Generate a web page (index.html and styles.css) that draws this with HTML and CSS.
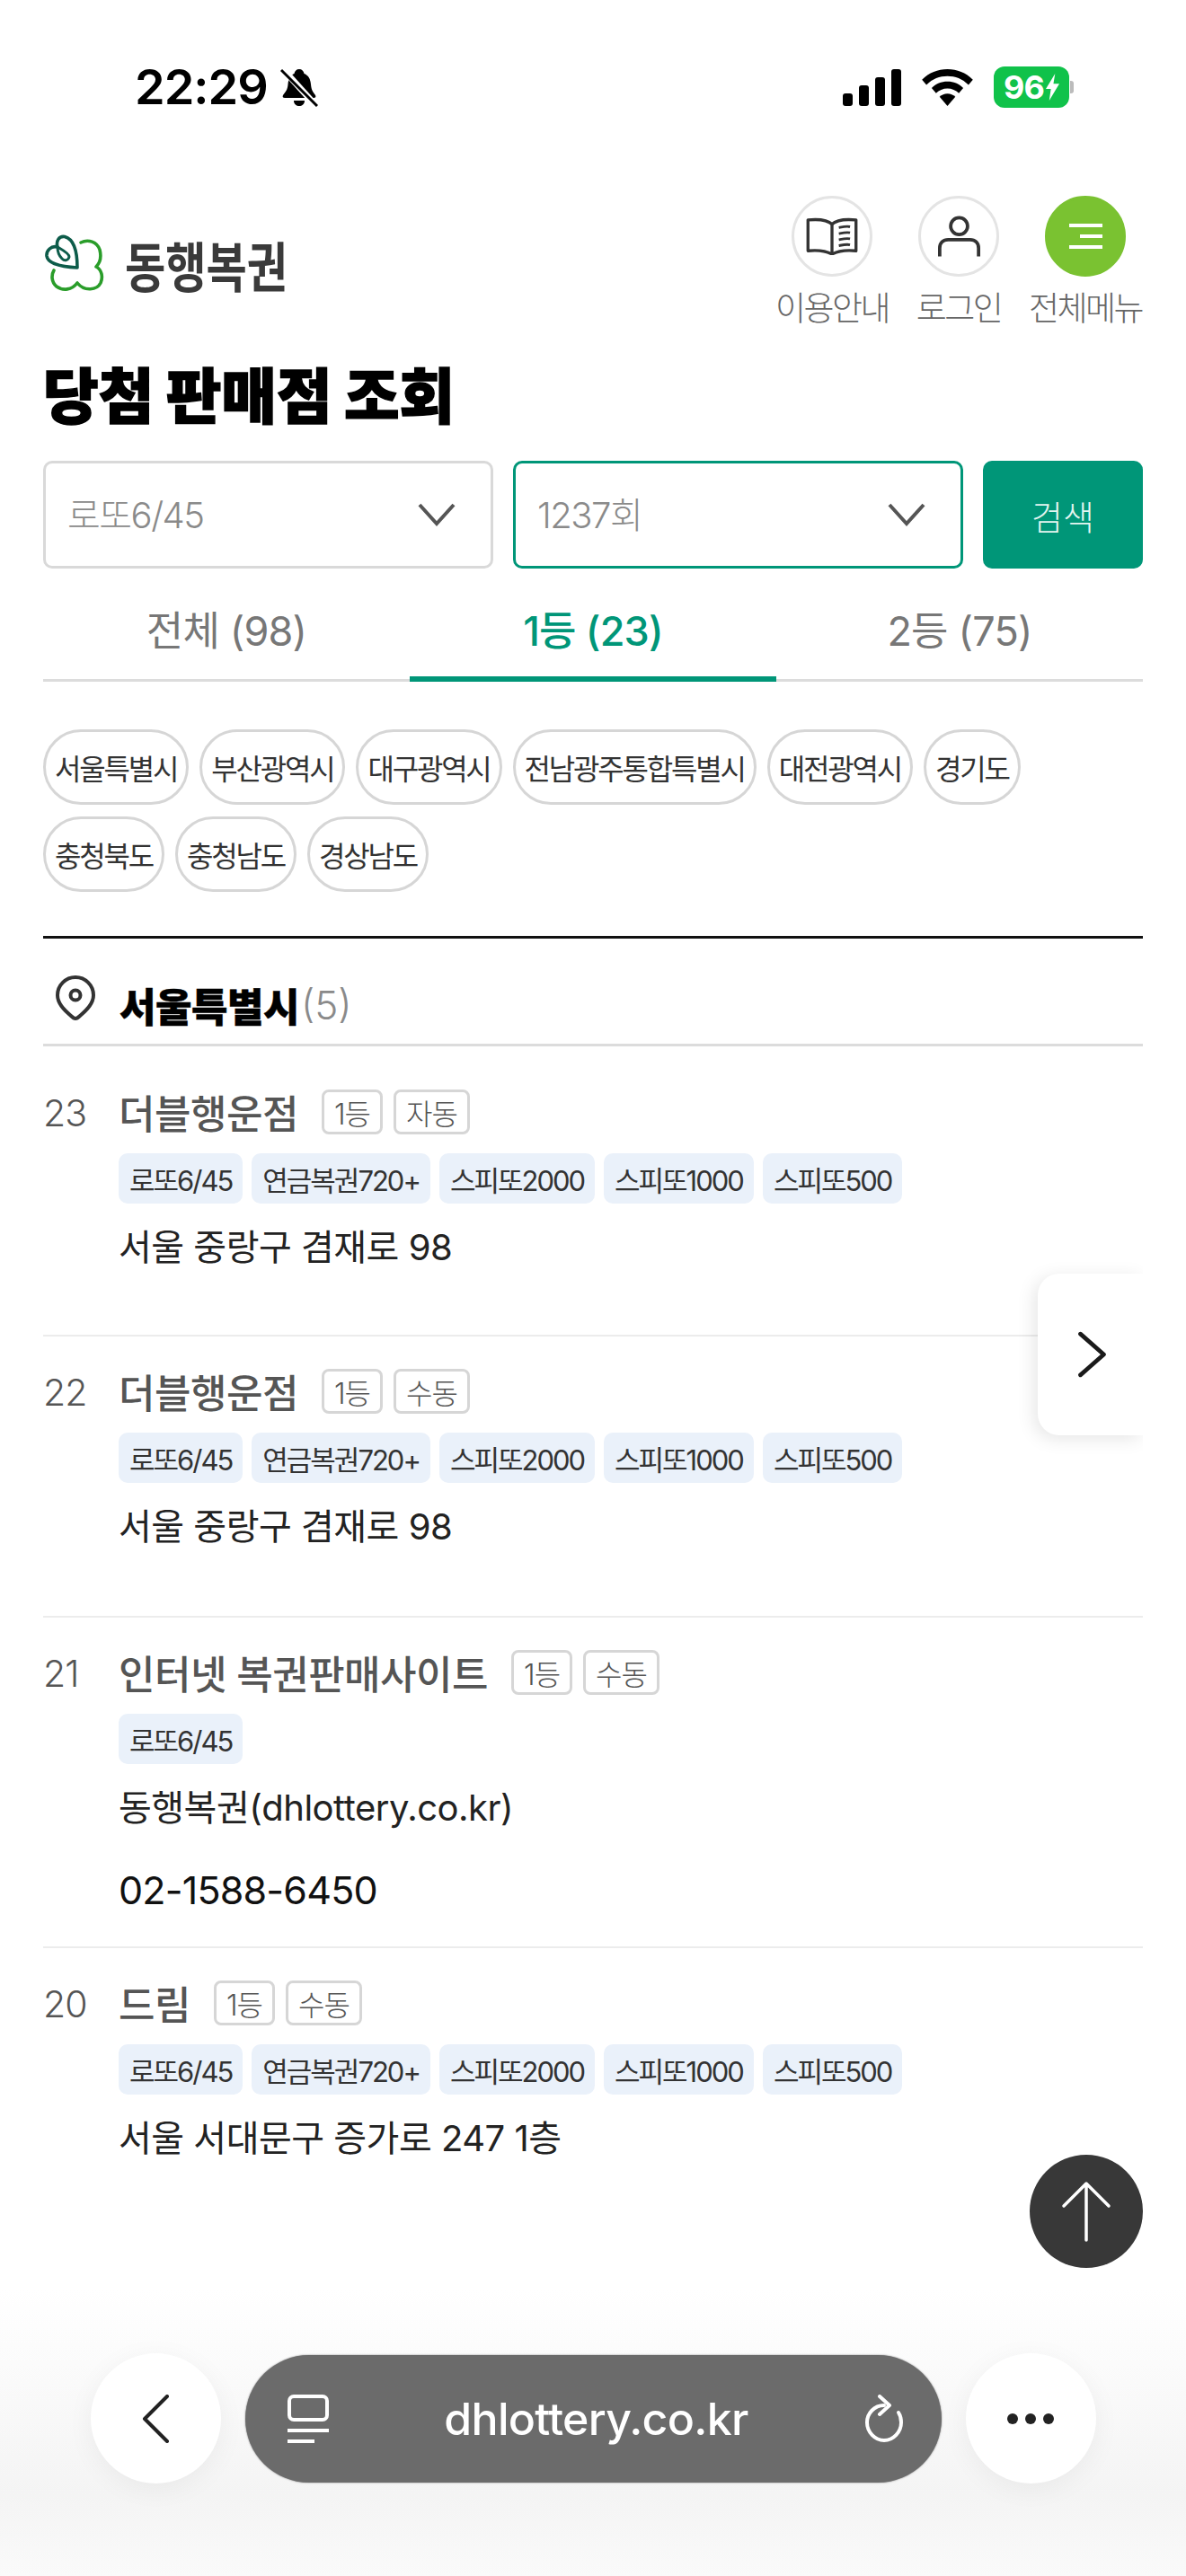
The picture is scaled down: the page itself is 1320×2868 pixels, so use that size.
FILE: index.html
```html
<!DOCTYPE html>
<html lang="ko">
<head>
  <meta charset="UTF-8">
  <meta name="viewport" content="width=device-width, initial-scale=1.0">
  <title>당첨 판매점 조회</title>
  <link rel="stylesheet" href="styles.css">
</head>
<body>

<div class="statusBar">
  <div class="statusLeft">
    <span class="clock">22:29</span>
    <svg class="bell" viewBox="0 0 42 44"><path d="M21 2c3 0 5 2 5.500 5 5 2 7 6 7.500 12 .5 6 2 8 5 12 1 2 0 3-2 3H5c-2 0-3-1-2-3 3-4 5-6 5.500-12C9 13 11 9 15.500 7 16 4 18 2 21 2z" fill="#000"/><path d="M15 37h12c0 4-3 6-6 6s-6-2-6-6z" fill="#000"/><path d="M2 1l38 42" stroke="#fff" stroke-width="7"/><path d="M1 3l40 40" stroke="#000" stroke-width="3"/></svg>
  </div>
  <div class="statusRight">
    <div class="signal"><i class="sig1"></i><i class="sig2"></i><i class="sig3"></i><i class="sig4"></i></div>
    <svg class="wifi" viewBox="0 0 58 42"><path d="M29 0c11 0 21 4 29 12l-5 6C46 11 38 8 29 8S12 11 5 18l-5-6C8 4 18 0 29 0z"/><path d="M29 14c7 0 13 2.500 18 7.500l-5 6c-3.500-3.500-8-5.500-13-5.500s-9.500 2-13 5.500l-5-6C16 16.500 22 14 29 14z"/><path d="M29 28c3.500 0 6.500 1.300 9 3.500L29 42l-9-10.500c2.500-2.200 5.500-3.500 9-3.500z"/></svg>
    <div class="battery"><span class="batteryLevel">96</span><svg class="bolt" viewBox="0 0 16 32"><path d="M11 0L0 18h6l-2 14L16 12H9z" fill="#fff"/></svg></div>
    <div class="batteryCap"></div>
  </div>
</div>

<div class="page">
  <header class="siteHeader">
    <div class="logo">
      <svg class="logoMark" viewBox="0 0 66 64" fill="none" stroke-linecap="round" stroke-linejoin="round">
        <path d="M40 9C48 5 58 8 61 17C63 25 61 32 57 36C63 39 65 47 62 54C58 62 44 64 36 54C30 62 20 63 13 58C7 53 7 45 10 40" stroke="#2a9d2a" stroke-width="3.600"/>
        <path d="M36 37C36 25 35 6 22 2.500C16 1.500 12 7 14 14C7 12 1.500 18 2 24C3 33 20 36 36 37z" stroke="#0d5c4a" stroke-width="3.600"/>
        <path d="M14 14C19 17 27 21 27 25C26 29 22 30 19 27C16 24 14 20 14 14z" stroke="#0d5c4a" stroke-width="3"/>
      </svg>
      <span class="logoText">동행복권</span>
    </div>
    <nav class="headerMenu">
      <div class="menuItem">
        <div class="menuIcon">
          <svg viewBox="0 0 62 44" width="60" height="42" fill="none" stroke="#333" stroke-width="3.500" stroke-linejoin="round"><path d="M31 8C26 3 14 2 3 3v36c10-1 21 0 28 4 7-4 18-5 28-4V3C48 2 36 3 31 8z"/><path d="M31 8v35"/><path d="M39 12c5-1 9-2 13-1M39 19c5-1 9-2 13-1M39 26c5-1 9-2 13-1M39 33c5-1 9-2 13-1" stroke-width="3"/></svg>
        </div>
        <span class="menuLabel">이용안내</span>
      </div>
      <div class="menuItem">
        <div class="menuIcon">
          <svg viewBox="0 0 50 48" width="47" height="48" fill="none" stroke="#333" stroke-width="4"><circle cx="25" cy="12" r="10"/><path d="M2 48V38c0-6 4-10 10-10h26c6 0 10 4 10 10v10"/></svg>
        </div>
        <span class="menuLabel">로그인</span>
      </div>
      <div class="menuItem">
        <div class="menuIcon menuIconGreen">
          <div class="menuBars"><i class="barLong"></i><i class="barShort"></i><i class="barLong"></i></div>
        </div>
        <span class="menuLabel">전체메뉴</span>
      </div>
    </nav>
  </header>

  <h1 class="pageTitle">당첨 판매점 조회</h1>

  <div class="searchRow">
    <div class="selectBox">
      <span class="selectText">로또6/45</span>
      <svg class="chevron" viewBox="0 0 42 26"><path d="M2 2l19 21L40 2" fill="none" stroke="#555" stroke-width="4"/></svg>
    </div>
    <div class="selectBox selectActive">
      <span class="selectText">1237회</span>
      <svg class="chevron" viewBox="0 0 42 26"><path d="M2 2l19 21L40 2" fill="none" stroke="#555" stroke-width="4"/></svg>
    </div>
    <button class="searchButton">검색</button>
  </div>

  <div class="tabs">
    <div class="tab">전체 (98)</div>
    <div class="tab tabActive">1등 (23)</div>
    <div class="tab">2등 (75)</div>
  </div>

  <div class="chips">
    <span class="chip">서울특별시</span>
    <span class="chip">부산광역시</span>
    <span class="chip">대구광역시</span>
    <span class="chip">전남광주통합특별시</span>
    <span class="chip">대전광역시</span>
    <span class="chip">경기도</span>
    <span class="chip">충청북도</span>
    <span class="chip">충청남도</span>
    <span class="chip">경상남도</span>
  </div>

  <div class="regionHead">
    <svg class="pin" viewBox="0 0 44 50" fill="none" stroke="#333" stroke-width="4"><path d="M22 48c-2 0-3-1-5-3C9 38 2 31 2 22 2 11 11 2 22 2s20 9 20 20c0 9-7 16-15 23-2 2-3 3-5 3z"/><circle cx="22" cy="22" r="5.500"/></svg>
    <span class="regionName">서울특별시</span><span class="regionCount">(5)</span>
  </div>

  <div class="shopRow shopRowFirst">
    <span class="shopNum">23</span>
    <div class="shopBody">
      <div class="shopTitle"><span class="shopName">더블행운점</span><span class="badge">1등</span><span class="badge">자동</span></div>
      <div class="tags"><span class="tag">로또6/45</span><span class="tag">연금복권720+</span><span class="tag">스피또2000</span><span class="tag">스피또1000</span><span class="tag">스피또500</span></div>
      <p class="address">서울 중랑구 겸재로 98</p>
    </div>
  </div>

  <div class="shopRow">
    <span class="shopNum">22</span>
    <div class="shopBody">
      <div class="shopTitle"><span class="shopName">더블행운점</span><span class="badge">1등</span><span class="badge">수동</span></div>
      <div class="tags"><span class="tag">로또6/45</span><span class="tag">연금복권720+</span><span class="tag">스피또2000</span><span class="tag">스피또1000</span><span class="tag">스피또500</span></div>
      <p class="address">서울 중랑구 겸재로 98</p>
    </div>
  </div>

  <div class="shopRow shopRowTall">
    <span class="shopNum">21</span>
    <div class="shopBody">
      <div class="shopTitle"><span class="shopName">인터넷 복권판매사이트</span><span class="badge">1등</span><span class="badge">수동</span></div>
      <div class="tags"><span class="tag">로또6/45</span></div>
      <p class="address">동행복권(dhlottery.co.kr)</p>
      <p class="phone">02-1588-6450</p>
    </div>
  </div>

  <div class="shopRow">
    <span class="shopNum">20</span>
    <div class="shopBody">
      <div class="shopTitle"><span class="shopName">드림</span><span class="badge">1등</span><span class="badge">수동</span></div>
      <div class="tags"><span class="tag">로또6/45</span><span class="tag">연금복권720+</span><span class="tag">스피또2000</span><span class="tag">스피또1000</span><span class="tag">스피또500</span></div>
      <p class="address">서울 서대문구 증가로 247 1층</p>
    </div>
  </div>
</div>

<div class="nextButton">
  <svg viewBox="0 0 32 50" width="34" height="52"><path d="M3 3l25 22L3 47" fill="none" stroke="#1a1a1a" stroke-width="4.500" stroke-linecap="round" stroke-linejoin="round"/></svg>
</div>

<div class="topButton">
  <svg viewBox="0 0 56 68" width="56" height="68"><path d="M28 66V3M3 28L28 3l25 25" fill="none" stroke="#fff" stroke-width="3.500" stroke-linecap="round" stroke-linejoin="round"/></svg>
</div>

<div class="browserBar">
  <div class="roundButton">
    <svg viewBox="0 0 32 54" width="32" height="54"><path d="M29 2L4 27l25 25" fill="none" stroke="#222" stroke-width="4" stroke-linecap="round" stroke-linejoin="round"/></svg>
  </div>
  <div class="urlPill">
    <svg class="tabsIcon" viewBox="0 0 46 54" fill="none" stroke="#fff" stroke-width="4"><rect x="2" y="2" width="42" height="26" rx="5"/><path d="M0 40h46M0 52h30"/></svg>
    <span class="urlText">dhlottery.co.kr</span>
    <svg class="reloadIcon" viewBox="0 0 46 54" fill="none" stroke="#fff" stroke-width="4" stroke-linecap="round" stroke-linejoin="round"><path d="M23 12C12 12 4 21 4 31c0 11 9 20 19 20s19-9 19-20c0-4-1-8-3-11"/><path d="M18 2l11 10-11 10"/></svg>
  </div>
  <div class="roundButton">
    <div class="dots"><i></i><i></i><i></i></div>
  </div>
</div>

</body>
</html>
```
FILE: styles.css
```css
* {
  box-sizing: border-box;
  margin: 0;
  padding: 0;
}

html, body {
  width: 1320px;
  height: 2868px;
  overflow: hidden;
}

body {
  position: relative;
  background-color: #ffffff;
  font-family: 'Inter', 'Noto Sans CJK KR', sans-serif;
  color: #222;
}

/* status bar */
.statusBar {
  height: 218px;
  display: flex;
  justify-content: space-between;
  align-items: flex-start;
  padding: 74px 125px 0 150px;
}

.statusLeft {
  display: flex;
  align-items: center;
  gap: 14px;
}

.clock {
  font-size: 54px;
  font-weight: 600;
  line-height: 46px;
  letter-spacing: -1px;
  color: #000;
}

.bell {
  width: 42px;
  height: 44px;
}

.statusRight {
  display: flex;
  align-items: center;
}

.signal {
  display: flex;
  align-items: flex-end;
  gap: 7px;
  height: 42px;
  margin-right: 23px;
}

.signal i {
  display: block;
  width: 11px;
  background-color: #000;
  border-radius: 3px;
}

.sig1 { height: 14px; }
.sig2 { height: 23px; }
.sig3 { height: 32px; }
.sig4 { height: 41px; }

.wifi {
  width: 57px;
  height: 41px;
  margin-right: 23px;
}

.battery {
  width: 84px;
  height: 46px;
  background-color: #10c24a;
  border-radius: 12px;
  display: flex;
  align-items: center;
  justify-content: center;
  gap: 2px;
}

.batteryLevel {
  font-size: 36px;
  font-weight: 700;
  letter-spacing: -1px;
  color: #fff;
  line-height: 46px;
}

.bolt {
  width: 15px;
  height: 30px;
}

.batteryCap {
  width: 4px;
  height: 14px;
  margin-left: 1px;
  background-color: #bbb;
  border-radius: 0 3px 3px 0;
}

/* page */
.page {
  padding: 0 48px;
}

.siteHeader {
  display: flex;
  justify-content: space-between;
  align-items: flex-start;
  height: 196px;
}

.logo {
  display: flex;
  align-items: center;
  gap: 23px;
  height: 150px;
  margin-left: 2px;
}

.logoMark {
  width: 66px;
  height: 64px;
}

.logoText {
  font-size: 60px;
  font-weight: 700;
  transform: scaleX(0.82);
  transform-origin: left center;
  color: #3a3a3a;
}

.headerMenu {
  display: flex;
  gap: 13px;
}

.menuItem {
  display: flex;
  flex-direction: column;
  align-items: center;
  width: 128px;
}

.menuIcon {
  width: 90px;
  height: 90px;
  flex: none;
  border: 3px solid #e4e4e4;
  border-radius: 50%;
  display: flex;
  align-items: center;
  justify-content: center;
}

.menuIconGreen {
  background-color: #7ac231;
  border-color: #7ac231;
}

.menuBars {
  width: 38px;
  display: flex;
  flex-direction: column;
  align-items: flex-end;
  gap: 8px;
}

.menuBars i {
  display: block;
  height: 4px;
  background-color: #fff;
}

.barLong { width: 37px; }
.barShort { width: 25px; }

.menuLabel {
  margin-top: 14px;
  font-size: 37px;
  font-weight: 300;
  line-height: 44px;
  letter-spacing: -2.500px;
  white-space: nowrap;
  color: #666;
}

.pageTitle {
  margin-top: -7px;
  font-size: 67px;
  font-weight: 900;
  line-height: 70px;
  -webkit-text-stroke: 1.500px #000;
  color: #000;
}

/* search */
.searchRow {
  display: flex;
  gap: 22px;
  margin-top: 36px;
}

.selectBox {
  width: 501px;
  height: 120px;
  border: 3px solid #d9d9d9;
  border-radius: 10px;
  display: flex;
  align-items: center;
  justify-content: space-between;
  padding: 0 39px 0 24px;
  font-size: 40px;
  font-weight: 300;
  letter-spacing: -1.500px;
  color: #8a8a8a;
}

.selectText {
  margin-top: -5px;
}

.selectActive {
  border-color: #009678;
}

.chevron {
  width: 42px;
  height: 26px;
}

.searchButton {
  width: 178px;
  height: 120px;
  border: none;
  border-radius: 10px;
  background-color: #009678;
  color: #e4f5f0;
  font-family: inherit;
  font-size: 38px;
  font-weight: 300;
}

/* tabs */
.tabs {
  display: flex;
  height: 126px;
  border-bottom: 3px solid #dcdcdc;
}

.tab {
  flex: 1;
  position: relative;
  text-align: center;
  padding-top: 40px;
  font-size: 45px;
  font-weight: 400;
  line-height: 60px;
  letter-spacing: -0.800px;
  color: #777;
}

.tabActive {
  color: #009678;
  font-weight: 500;
}

.tabActive::after {
  content: '';
  position: absolute;
  left: 0;
  right: 0;
  bottom: -3px;
  height: 6px;
  background-color: #009678;
}

/* region chips */
.chips {
  display: flex;
  flex-wrap: wrap;
  gap: 13px 12px;
  margin-top: 53px;
  padding-bottom: 49px;
  border-bottom: 3px solid #111;
}

.chip {
  height: 84px;
  padding: 0 10px;
  border: 3px solid #d6d6d6;
  border-radius: 42px;
  display: flex;
  align-items: center;
  font-size: 32px;
  letter-spacing: -2.200px;
  font-weight: 400;
  color: #333;
}

.regionHead {
  height: 120px;
  padding-top: 30px;
  display: flex;
  align-items: center;
  border-bottom: 3px solid #dcdcdc;
}

.pin {
  width: 44px;
  height: 50px;
  margin: -16px 27px 0 14px;
}

.regionName {
  font-size: 44px;
  font-weight: 900;
  letter-spacing: -0.500px;
  -webkit-text-stroke: 0.500px #000;
  color: #000;
}

.regionCount {
  margin-left: 2px;
  font-size: 44px;
  font-weight: 300;
  color: #8a8a8a;
}

/* shop rows */
.shopRow {
  display: flex;
  height: 313px;
  padding-top: 34px;
  border-bottom: 2px solid #ececec;
}

.shopRowFirst {
  height: 323px;
  padding-top: 46px;
}

.shopRowTall {
  height: 368px;
}

.shopRow:last-child {
  border-bottom: none;
}

.shopNum {
  width: 84px;
  flex: none;
  font-size: 41px;
  font-weight: 300;
  line-height: 56px;
  letter-spacing: -1px;
  color: #555;
}

.shopTitle {
  display: flex;
  align-items: center;
  height: 54px;
  gap: 12px;
}

.shopName {
  font-size: 44px;
  font-weight: 500;
  letter-spacing: -0.500px;
  margin-right: 14px;
  color: #555;
}

.badge {
  height: 50px;
  padding: 0 11px;
  border: 3px solid #d6d6d6;
  border-radius: 8px;
  display: flex;
  align-items: center;
  font-size: 32px;
  font-weight: 300;
  letter-spacing: -1px;
  color: #555;
}

.tags {
  display: flex;
  gap: 10px;
  margin-top: 19px;
}

.tag {
  height: 56px;
  padding: 0 12px;
  border-radius: 10px;
  background-color: #eaf1fa;
  display: flex;
  align-items: center;
  font-size: 31px;
  letter-spacing: -2px;
  color: #333;
}

.address {
  margin-top: 24px;
  font-size: 40px;
  font-weight: 400;
  line-height: 50px;
  letter-spacing: -0.500px;
  color: #222;
}

.phone {
  margin-top: 41px;
  font-size: 43px;
  line-height: 50px;
  letter-spacing: -0.800px;
  color: #111;
}

/* floating buttons */
.nextButton {
  position: absolute;
  left: 1155px;
  top: 1418px;
  width: 117px;
  height: 180px;
  background-color: #fff;
  border-radius: 24px 0 0 24px;
  box-shadow: -4px 4px 20px rgba(0, 0, 0, 0.1);
  clip-path: inset(-40px 0 -40px -40px);
  display: flex;
  align-items: center;
  padding-left: 44px;
}

.topButton {
  position: absolute;
  left: 1146px;
  top: 2399px;
  width: 126px;
  height: 126px;
  border-radius: 50%;
  background-color: #383838;
  display: flex;
  align-items: center;
  justify-content: center;
}

.browserBar {
  position: absolute;
  left: 0;
  right: 0;
  bottom: 0;
  height: 320px;
  background: linear-gradient(to bottom, rgba(255, 255, 255, 0), #f4f4f4 72%, #fafafa);
  display: flex;
  justify-content: center;
  gap: 27px;
  padding-top: 72px;
}

.roundButton {
  width: 145px;
  height: 145px;
  border-radius: 50%;
  background-color: #fff;
  box-shadow: 0 6px 30px rgba(0, 0, 0, 0.05);
  display: flex;
  align-items: center;
  justify-content: center;
}

.urlPill {
  width: 775px;
  height: 142px;
  margin-top: 2px;
  border-radius: 71px;
  background-color: #6b6b6b;
  box-shadow: 0 0 2px rgba(0, 0, 0, 0.5);
  display: flex;
  align-items: center;
  justify-content: space-between;
  padding: 0 40px 0 47px;
  color: #fff;
}

.tabsIcon {
  width: 46px;
  height: 54px;
}

.reloadIcon {
  width: 46px;
  height: 54px;
}

.urlText {
  font-size: 50px;
  font-weight: 500;
  letter-spacing: -0.700px;
}

.dots {
  display: flex;
  gap: 8px;
}

.dots i {
  display: block;
  width: 12px;
  height: 12px;
  border-radius: 50%;
  background-color: #222;
}
```
